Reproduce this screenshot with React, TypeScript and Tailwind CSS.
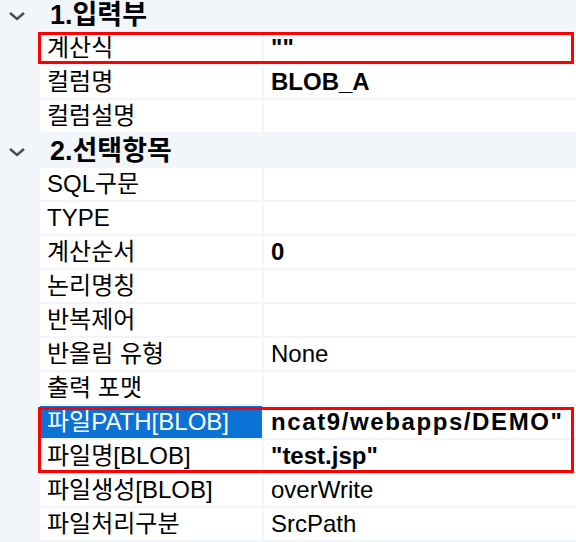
import React from 'react';

type Row =
  | { kind: 'group'; label: string }
  | { kind: 'item'; name: string; value?: string; bold?: boolean; selected?: boolean; wide?: boolean };

const rows: Row[] = [
  { kind: 'group', label: '1.입력부' },
  { kind: 'item', name: '계산식', value: '""', bold: true },
  { kind: 'item', name: '컬럼명', value: 'BLOB_A', bold: true },
  { kind: 'item', name: '컬럼설명' },
  { kind: 'group', label: '2.선택항목' },
  { kind: 'item', name: 'SQL구문' },
  { kind: 'item', name: 'TYPE' },
  { kind: 'item', name: '계산순서', value: '0', bold: true },
  { kind: 'item', name: '논리명칭' },
  { kind: 'item', name: '반복제어' },
  { kind: 'item', name: '반올림 유형', value: 'None' },
  { kind: 'item', name: '출력 포맷' },
  { kind: 'item', name: '파일PATH[BLOB]', value: 'ncat9/webapps/DEMO"', bold: true, selected: true, wide: true },
  { kind: 'item', name: '파일명[BLOB]', value: '"test.jsp"', bold: true },
  { kind: 'item', name: '파일생성[BLOB]', value: 'overWrite' },
  { kind: 'item', name: '파일처리구분', value: 'SrcPath' },
];

const Chevron = () => (
  <svg width="18" height="10" viewBox="0 0 18 10" className="shrink-0">
    <path d="M2 2 L9 8 L16 2" fill="none" stroke="#4b4b4b" strokeWidth="2.4" />
  </svg>
);

const App = () => {
  return (
    <div className="relative w-[576px] h-[542px] overflow-hidden bg-[#f2f5fa] text-black text-[24px] font-['Liberation_Sans','Noto_Sans_CJK_KR',sans-serif]">
      <div className="-mt-[2px]">
        {rows.map((row, i) =>
          row.kind === 'group' ? (
            <div key={i} className="flex h-[34px] items-center">
              <div className="pl-[8px] pt-[2px]">
                <Chevron />
              </div>
              <span className="ml-[24px] font-bold text-[27px] leading-[34px]">{row.label}</span>
            </div>
          ) : (
            <div key={i} className="flex h-[34px] items-start">
              <div className="w-[40px] shrink-0" />
              <div
                className={`w-[222px] h-[32px] shrink-0 pl-[7px] leading-[32px] whitespace-nowrap overflow-hidden ${
                  row.selected ? 'bg-[#0b72d6] text-white' : 'bg-white'
                }`}
              >
                {row.name}
              </div>
              <div className="ml-[2px] flex-1 h-[32px] bg-white pl-[7px] overflow-hidden">
                <div
                  className={`whitespace-nowrap leading-[32px] ${row.bold ? 'font-bold' : ''} ${
                    row.wide ? 'tracking-[1.6px]' : ''
                  }`}
                >
                  {row.value}
                </div>
              </div>
            </div>
          )
        )}
      </div>

      {/* red annotation boxes */}
      <div className="absolute left-[38px] top-[32px] w-[536px] h-[32px] border-[3px] border-[#ff0000]" />
      <div className="absolute left-[38px] top-[407px] w-[536px] h-[66px] border-[3px] border-[#ff0000]" />
    </div>
  );
};

export default App;
